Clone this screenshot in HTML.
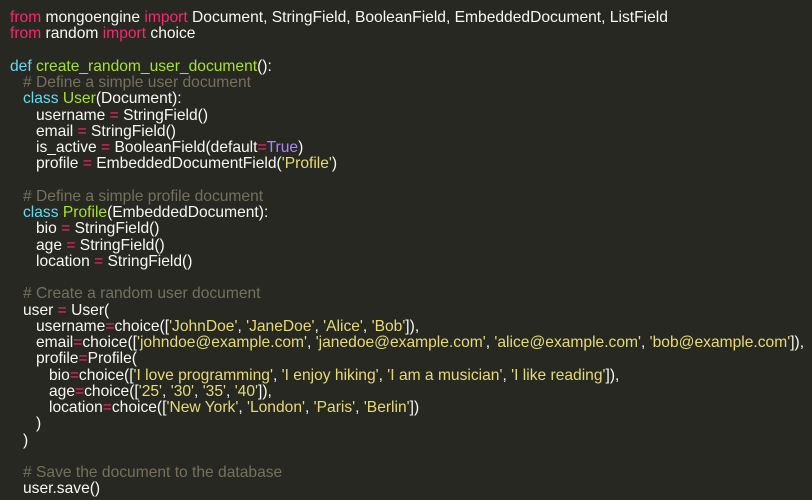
<!DOCTYPE html>
<html><head><meta charset="utf-8"><style>
html,body{margin:0;padding:0;background:#272822;width:812px;height:500px;overflow:hidden}
pre{margin:0;padding:10px 0 0 10px;font-family:"Liberation Sans",sans-serif;font-size:15.6px;line-height:16.25px;color:#f8f8f2;white-space:pre}
.k{color:#f92672}.d{color:#66d9ef}.f{color:#a6e22e}.c{color:#75715e}.s{color:#e6db74}.n{color:#ae81ff}
</style></head><body><pre><span class="k">from</span> mongoengine <span class="k">import</span> Document, StringField, BooleanField, EmbeddedDocument, ListField
<span class="k">from</span> random <span class="k">import</span> choice

<span class="d">def</span> <span class="f">create_random_user_document</span>():
   <span class="c"># Define a simple user document</span>
   <span class="d">class</span> <span class="f">User</span>(Document):
      username <span class="k">=</span> StringField()
      email <span class="k">=</span> StringField()
      is_active <span class="k">=</span> BooleanField(default<span class="k">=</span><span class="n">True</span>)
      profile <span class="k">=</span> EmbeddedDocumentField(<span class="s">'Profile'</span>)

   <span class="c"># Define a simple profile document</span>
   <span class="d">class</span> <span class="f">Profile</span>(EmbeddedDocument):
      bio <span class="k">=</span> StringField()
      age <span class="k">=</span> StringField()
      location <span class="k">=</span> StringField()

   <span class="c"># Create a random user document</span>
   user <span class="k">=</span> User(
      username<span class="k">=</span>choice([<span class="s">'JohnDoe'</span>, <span class="s">'JaneDoe'</span>, <span class="s">'Alice'</span>, <span class="s">'Bob'</span>]),
      email<span class="k">=</span>choice([<span class="s">'johndoe@example.com'</span>, <span class="s">'janedoe@example.com'</span>, <span class="s">'alice@example.com'</span>, <span class="s">'bob@example.com'</span>]),
      profile<span class="k">=</span>Profile(
         bio<span class="k">=</span>choice([<span class="s">'I love programming'</span>, <span class="s">'I enjoy hiking'</span>, <span class="s">'I am a musician'</span>, <span class="s">'I like reading'</span>]),
         age<span class="k">=</span>choice([<span class="s">'25'</span>, <span class="s">'30'</span>, <span class="s">'35'</span>, <span class="s">'40'</span>]),
         location<span class="k">=</span>choice([<span class="s">'New York'</span>, <span class="s">'London'</span>, <span class="s">'Paris'</span>, <span class="s">'Berlin'</span>])
      )
   )

   <span class="c"># Save the document to the database</span>
   user.save()
</pre></body></html>
